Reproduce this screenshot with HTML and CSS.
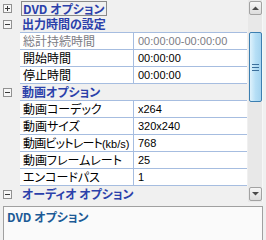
FILE: index.html
```html
<!DOCTYPE html>
<html lang="ja">
<head>
    <meta charset="UTF-8">
    <title>DVD オプション</title>
    <link rel="stylesheet" href="styles.css">
</head>
<body>
<div id="pane">
    <div id="grid">
        <div id="rows">
            <div class="cat">
                <svg class="toggle" width="9" height="9"><rect x="0.5" y="0.5" width="8" height="8" fill="#f7f7f7" stroke="#919191"/><path d="M2 4.5h5M4.5 2v5" stroke="#3a3a3a"/></svg>
                <span class="cat-label focus">DVD オプション</span>
            </div>
            <div class="cat">
                <svg class="toggle" width="9" height="9"><rect x="0.5" y="0.5" width="8" height="8" fill="#f7f7f7" stroke="#919191"/><path d="M2 4.5h5" stroke="#3a3a3a"/></svg>
                <span class="cat-label">出力時間の設定</span>
            </div>
            <div class="group">
                <div class="prop readonly"><div class="name">総計持続時間</div><div class="value">00:00:00-00:00:00</div></div>
                <div class="prop"><div class="name">開始時間</div><div class="value">00:00:00</div></div>
                <div class="prop"><div class="name">停止時間</div><div class="value">00:00:00</div></div>
            </div>
            <div class="cat">
                <svg class="toggle" width="9" height="9"><rect x="0.5" y="0.5" width="8" height="8" fill="#f7f7f7" stroke="#919191"/><path d="M2 4.5h5" stroke="#3a3a3a"/></svg>
                <span class="cat-label">動画オプション</span>
            </div>
            <div class="group">
                <div class="prop"><div class="name">動画コーデック</div><div class="value">x264</div></div>
                <div class="prop"><div class="name">動画サイズ</div><div class="value">320x240</div></div>
                <div class="prop"><div class="name tight">動画ビットレート<span class="unit">(kb/s)</span></div><div class="value">768</div></div>
                <div class="prop"><div class="name">動画フレームレート</div><div class="value">25</div></div>
                <div class="prop"><div class="name">エンコードパス</div><div class="value">1</div></div>
            </div>
            <div class="cat">
                <svg class="toggle" width="9" height="9"><rect x="0.5" y="0.5" width="8" height="8" fill="#f7f7f7" stroke="#919191"/><path d="M2 4.5h5" stroke="#3a3a3a"/></svg>
                <span class="cat-label">オーディオ オプション</span>
            </div>
        </div>
        <div id="scrollbar">
            <div class="sb-btn">
                <svg width="7" height="4"><path d="M0 4L3.5 0.5L7 4Z" fill="#4a4a4a"/></svg>
            </div>
            <div class="sb-thumb">
                <svg width="7" height="7"><path d="M0 0.5h7M0 3.5h7M0 6.5h7" stroke="#3b6f9c"/></svg>
            </div>
            <div class="sb-track"></div>
            <div class="sb-btn">
                <svg width="7" height="4"><path d="M0 0L7 0L3.5 3.5Z" fill="#4a4a4a"/></svg>
            </div>
        </div>
    </div>
    <div id="desc">
        <div class="desc-title">DVD オプション</div>
    </div>
</div>
</body>
</html>
```

FILE: styles.css
```css
* {
    margin: 0;
    padding: 0;
    box-sizing: border-box;
}
html, body {
    width: 266px;
    height: 240px;
    overflow: hidden;
    background-color: #f0f0f0;
}
body {
    font-family: "Noto Sans CJK JP", "Liberation Sans", sans-serif;
    font-size: 12px;
    line-height: 16px;
    font-feature-settings: "palt";
}
#pane {
    display: flex;
    flex-direction: column;
    height: 240px;
}
#grid {
    display: flex;
    height: 202px;
}
#rows {
    width: 247px;
    overflow: hidden;
}
.cat {
    display: flex;
    align-items: center;
    height: 16px;
    overflow: hidden;
}
.toggle {
    margin-left: 3px;
    flex: none;
}
.cat-label {
    margin-left: 10px;
    font-weight: bold;
    color: #2b40aa;
    white-space: nowrap;
}
.cat-label.focus {
    align-self: stretch;
    margin: 1px 0 0 9px;
    padding: 0 2px 0 1px;
    border: 1px solid #8a8a8a;
    line-height: 13px;
    overflow: hidden;
}
.group {
    margin-left: 20px;
    border-bottom: 1px solid #a6bde0;
}
.prop {
    display: flex;
    height: 17px;
    border-top: 1px solid #a6bde0;
    background-color: #fff;
}
.prop .name {
    width: 114px;
    padding-left: 3px;
    border-right: 1px solid #a6bde0;
    white-space: nowrap;
    overflow: hidden;
    color: #000;
}
.prop .name.tight {
    letter-spacing: -0.8px;
}
.prop .name .unit {
    font-family: "Liberation Sans", sans-serif;
    font-size: 11px;
    letter-spacing: 0;
}
.prop .value {
    flex: 1;
    padding-left: 4px;
    font-family: "Liberation Sans", sans-serif;
    font-size: 11px;
    color: #000;
}
.prop.readonly .name,
.prop.readonly .value {
    color: #7c7c84;
}
#scrollbar {
    display: flex;
    flex-direction: column;
    align-items: center;
    width: 15px;
    margin-left: 1px;
    padding: 1px 0 1px;
    background-color: #e8e8e8;
    border-right: 1px solid #f7f7f7;
}
.sb-btn {
    display: flex;
    align-items: center;
    justify-content: center;
    width: 13px;
    height: 14px;
    border: 1px solid #a2a2a2;
    border-radius: 2px;
    background: linear-gradient(#f6f6f6, #dcdcdc);
}
.sb-thumb {
    display: flex;
    align-items: center;
    justify-content: center;
    width: 13px;
    height: 70px;
    margin-top: 17px;
    border: 1px solid #3c7fb1;
    border-radius: 2px;
    background: linear-gradient(90deg, #dff2fc, #b6dff6 50%, #a4d3ef);
}
.sb-track {
    flex: 1;
}
#desc {
    flex: 1;
    margin: 4px 3px 0 3px;
    padding: 2px 3px;
    border: 1px solid #a0a0a0;
    border-bottom: none;
    background-color: #fafafa;
}
.desc-title {
    font-weight: bold;
    color: #1c5a96;
    white-space: nowrap;
}
```
